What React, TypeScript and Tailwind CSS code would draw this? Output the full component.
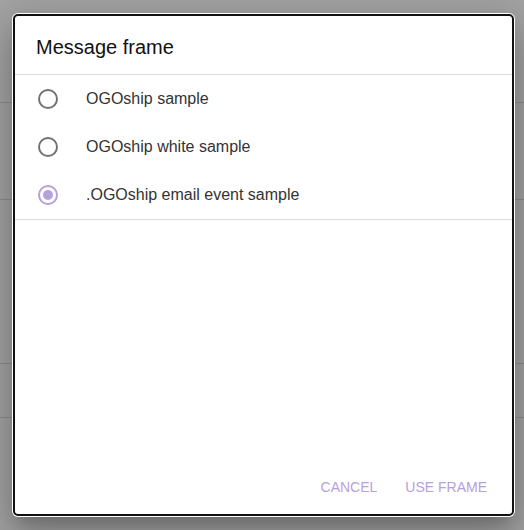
const options = [
  { label: "OGOship sample", checked: false },
  { label: "OGOship white sample", checked: false },
  { label: ".OGOship email event sample", checked: true },
];

const Radio = ({ checked }: { checked: boolean }) => (
  <svg width="24" height="24" viewBox="0 0 24 24" className="shrink-0">
    <circle
      cx="12"
      cy="12"
      r="9"
      fill="none"
      stroke={checked ? "#b5a1dc" : "#737373"}
      strokeWidth="2"
    />
    {checked && <circle cx="12" cy="12" r="5" fill="#b5a1dc" />}
  </svg>
);

export default function App() {
  return (
    <div
      className="relative w-full h-[530px] overflow-hidden bg-[#a3a3a3]"
      style={{ fontFamily: '"Liberation Sans", Arial, sans-serif' }}
    >
      {/* page behind the backdrop */}
      <div className="flex flex-col">
        <div className="h-[103px] border-b border-[#8c8c8c]" />
        <div className="h-[97px] border-b border-[#8c8c8c]" />
        <div className="h-[164px] border-b border-[#8c8c8c]" />
        <div className="h-[54px] border-b border-[#8c8c8c]" />
      </div>

      <div className="absolute left-[12px] top-[13px] w-[503px] h-[504px] bg-white rounded-[6px] p-px shadow-[0_11px_15px_-7px_rgba(0,0,0,0.2),0_24px_38px_3px_rgba(0,0,0,0.14),0_9px_46px_8px_rgba(0,0,0,0.12)]">
        <div className="h-full flex flex-col border-2 border-[#111] rounded-[5px] overflow-hidden">
          <div className="h-[59px] shrink-0 flex items-center pl-[21px] pt-[3px] border-b border-[#dcdcdc]">
            <h2 className="text-[20px] text-[#111]">Message frame</h2>
          </div>
          <div className="flex flex-col border-b border-[#dcdcdc]">
            {options.map((o) => (
              <div key={o.label} className="h-[48px] flex items-center pl-[21px]">
                <Radio checked={o.checked} />
                <span className="ml-[26px] text-[16px] text-[#333]">{o.label}</span>
              </div>
            ))}
          </div>
          <div className="flex-1" />
          <div className="h-[54px] shrink-0 flex items-center justify-end pr-[25px] gap-[28px]">
            <button className="text-[14px] text-[#b5a1dc] uppercase">Cancel</button>
            <button className="text-[14px] text-[#b5a1dc] uppercase">Use frame</button>
          </div>
        </div>
      </div>
    </div>
  );
}
